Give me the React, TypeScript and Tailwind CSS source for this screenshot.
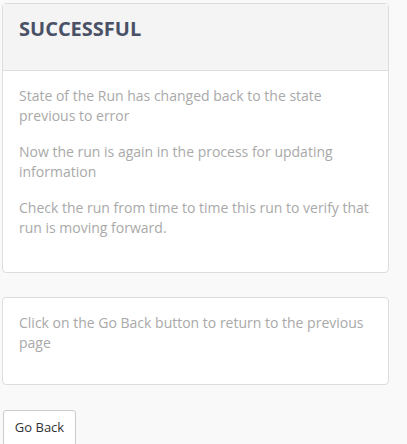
export default function App() {
  return (
    <div
      className="min-h-[444px] bg-[#f9f9f9] pt-[3px] pl-[2px] pr-[18px] text-[14px]"
      style={{ fontFamily: '"Open Sans", "Noto Sans", sans-serif' }}
    >
      <div className="rounded border border-[#dddddd] bg-white">
        <div className="h-[67px] border-b border-[#dddddd] bg-[#f4f4f4] px-4 pt-[11px]">
          <h1 className="text-[20px] font-bold leading-7 text-[#4a5167]">SUCCESSFUL</h1>
        </div>
        <div className="px-4 pt-[15px] pb-[18px] leading-5 text-[#a9a9a9]">
          <p className="mb-4">State of the Run has changed back to the state previous to error</p>
          <p className="mb-4">Now the run is again in the process for updating information</p>
          <p className="mb-4">Check the run from time to time this run to verify that run is moving forward.</p>
        </div>
      </div>

      <div className="mt-[24px] h-[88px] rounded border border-[#dddddd] bg-white px-4 pt-[15px] leading-5 text-[#a9a9a9]">
        <p>Click on the Go Back button to return to the previous page</p>
      </div>

      <button className="ml-px mt-[25px] h-[36px] w-[73px] rounded-[3px] border border-[#cccccc] bg-white text-[13px] text-[#333333]">
        Go Back
      </button>
    </div>
  );
}
